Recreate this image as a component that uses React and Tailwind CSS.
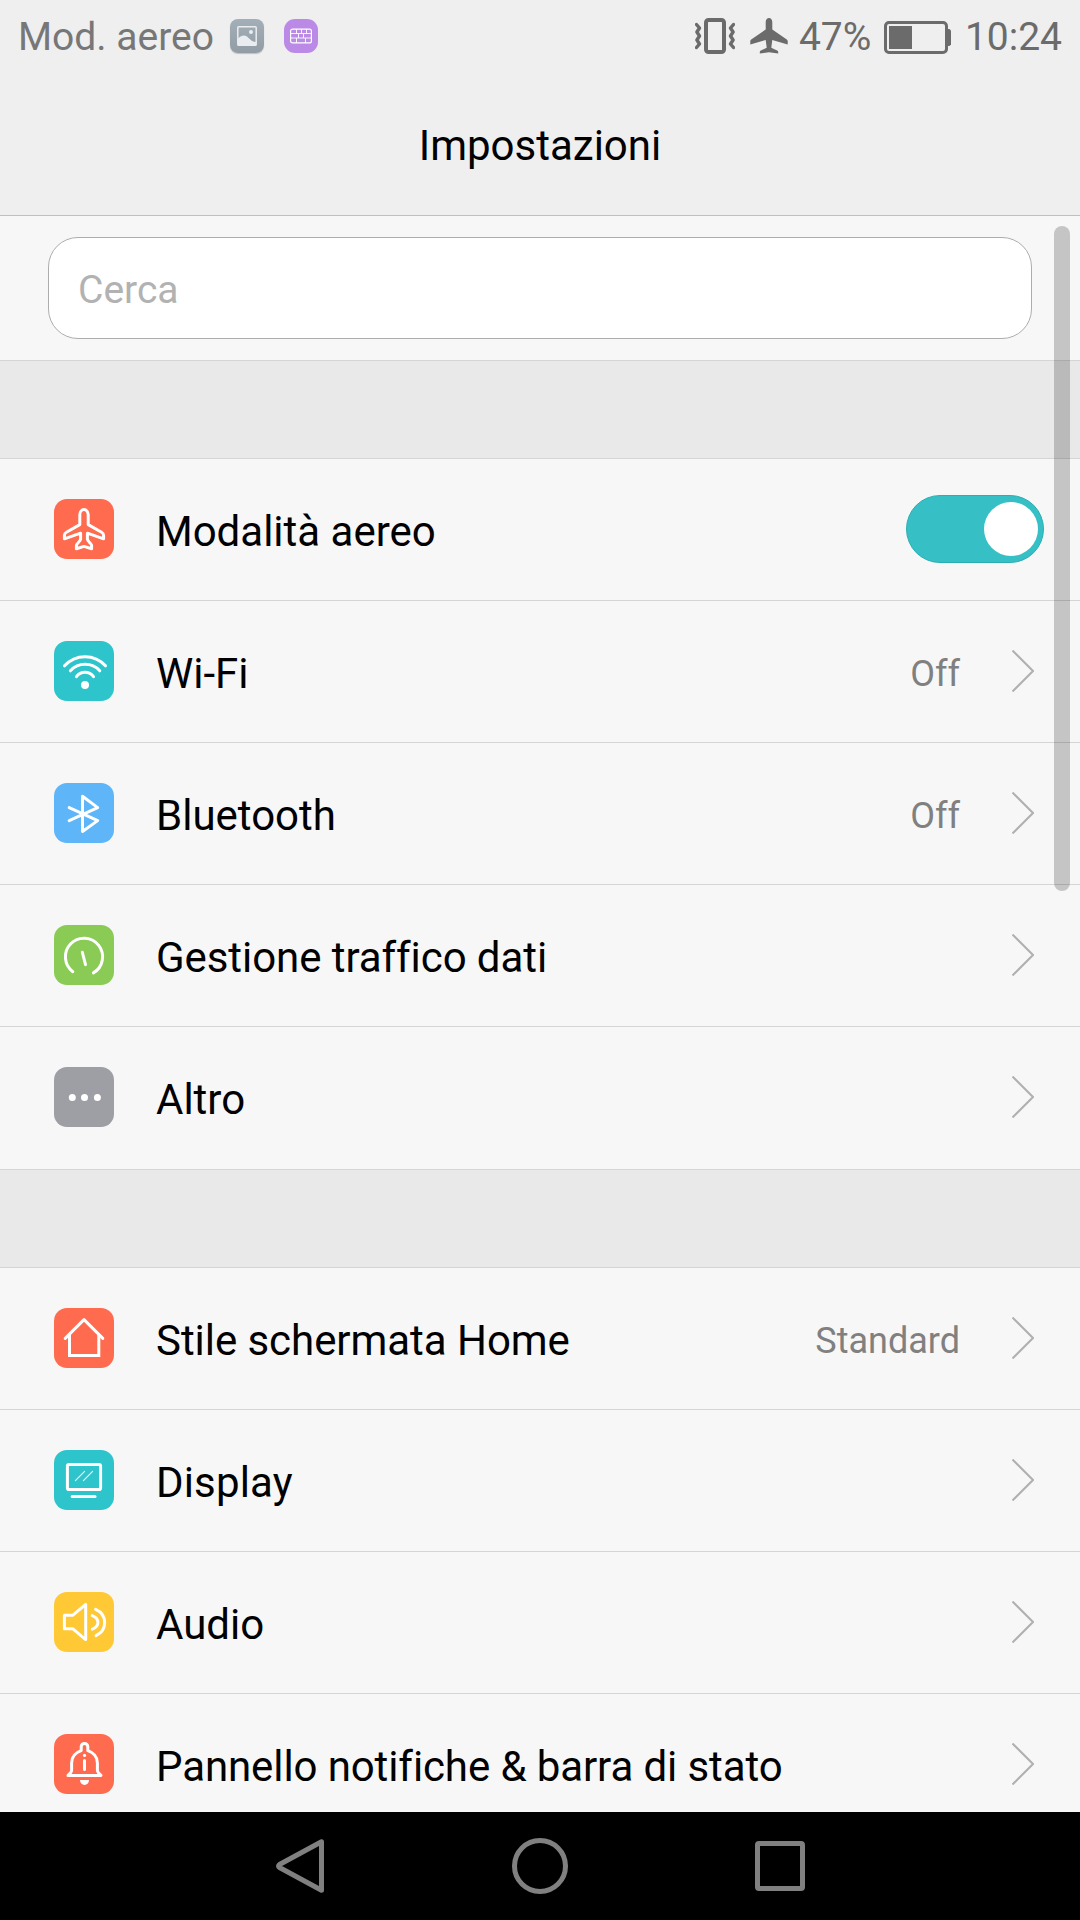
import React from 'react';

const PlaneIcon = () => (
  <path d="M30 10.6c-2.4 0-4.2 2.2-4.2 5.2v9.8L12.4 33.2c-1.4.8-2 1.8-2 3.2v3.4l16.2-5.6v6.2c-.9 2.8-3.8 3.6-4.2 6.2v3.2L30 47.4l7.6 2.4v-3.2c-.4-2.6-3.3-3.4-4.2-6.2v-6.2l16.2 5.6v-3.4c0-1.4-.6-2.4-2-3.2l-13.4-7.6v-9.8c0-3-1.8-5.2-4.2-5.2z" />
);

const WifiIcon = () => (
  <>
    <path d="M10.5 24.8a27.5 27.5 0 0 1 41 0" />
    <path d="M16.4 29.8a19.9 19.9 0 0 1 29.4 0" />
    <path d="M22.5 35.7a10.4 10.4 0 0 1 17 0" />
    <circle cx="31" cy="44" r="4" fill="white" stroke="none" />
  </>
);

const BluetoothIcon = () => (
  <path d="M15.2 24.6 43.7 37.6 28.5 48.5V13.3L43.7 24.6 15.2 37.6" />
);

const DataIcon = () => (
  <>
    <path d="M18.8 46.7a18.6 18.6 0 1 1 20.6 1.2" />
    <path d="M28.3 27.2 31.5 39.6" />
  </>
);

const MoreIcon = () => (
  <g fill="white" stroke="none">
    <circle cx="18.3" cy="30.4" r="3.5" />
    <circle cx="30.5" cy="30.4" r="3.5" />
    <circle cx="43.4" cy="30.4" r="3.5" />
  </g>
);

const HomeIcon = () => (
  <>
    <path d="M11.2 30.4 30 11.6 48.8 30.4" />
    <path d="M15.5 27v20.5h29.3V27" strokeLinejoin="miter" />
  </>
);

const DisplayIcon = () => (
  <>
    <rect x="13.4" y="14.4" width="33.2" height="25.2" rx="1.6" />
    <path d="M18.2 46.4H41" />
    <path d="M21.4 30.6l9.2-9.2M29.4 30.6l9.2-9.2" strokeWidth="1.1" />
  </>
);

const AudioIcon = () => (
  <>
    <path d="M10.4 23.3h8.2L31.7 12.4v35.2L18.6 36.7h-8.2z" />
    <path d="M38.2 23.6c7.6 2.8 7.6 10.6.2 13.6" />
    <path d="M41.6 17.4c12 5.2 12 21 .4 26.2" />
  </>
);

const BellIcon = () => (
  <>
    <path d="M27.2 16.6v-3.9a3.3 3.3 0 0 1 6.6 0v3.9c6 2 9.6 6.2 9.6 12.4v7.5c0 1.6 1.7 3 3.6 4.9H14c1.9-1.9 3.6-3.3 3.6-4.9V29c0-6.2 3.6-10.4 9.6-12.4z" />
    <path d="M30.5 26.6v9" />
    <circle cx="30.5" cy="21.4" r="1.6" fill="white" stroke="none" />
    <path d="M26 46h9a4.5 4.9 0 0 1-9 0z" fill="white" stroke="none" />
  </>
);

const groups = [
  [
    { label: 'Modalità aereo', icon: PlaneIcon, color: 'bg-[#ff6b4f]', toggle: true },
    { label: 'Wi-Fi', icon: WifiIcon, color: 'bg-[#2dc4cb]', value: 'Off' },
    { label: 'Bluetooth', icon: BluetoothIcon, color: 'bg-[#5eb6f8]', value: 'Off' },
    { label: 'Gestione traffico dati', icon: DataIcon, color: 'bg-[#8acb55]', spacing: 'tracking-[-0.07px]' },
    { label: 'Altro', icon: MoreIcon, color: 'bg-[#9e9fa5]' }
  ],
  [
    { label: 'Stile schermata Home', icon: HomeIcon, color: 'bg-[#ff6b4f]', value: 'Standard', spacing: 'tracking-[-0.05px]' },
    { label: 'Display', icon: DisplayIcon, color: 'bg-[#2dc4cb]', spacing: 'tracking-[0.15px]' },
    { label: 'Audio', icon: AudioIcon, color: 'bg-[#ffc835]' },
    { label: 'Pannello notifiche & barra di stato', icon: BellIcon, color: 'bg-[#ff6b4f]', spacing: 'tracking-[-0.1px]' }
  ]
];

const StatusBar = () => (
  <div className="flex h-[72px] shrink-0 items-center justify-between px-[18px] text-[39px] text-[#6b6b6b]">
    <div className="flex items-center">
      <span className="w-[212px] whitespace-nowrap pt-[2px] leading-[46px] text-[#777777]">Mod. aereo</span>
      <span className="flex h-[34px] w-[34px] items-center justify-center rounded-[8px] bg-linear-to-b from-[#a3afb8] to-[#929ca4] shadow-[0_1px_1px_rgba(0,0,0,0.2)]">
        <svg width="20" height="20" viewBox="0 0 20 20" fill="none">
          <rect x="0.8" y="0.8" width="18.4" height="18.4" rx="0.8" stroke="#e9edef" strokeWidth="1.5" />
          <circle cx="14" cy="6" r="2" fill="#e9edef" />
          <path d="M1 12.5C4 9.5 7 8.5 10 10.5c3 2.5 5 5.5 9 5.5v3H1z" fill="#e9edef" />
        </svg>
      </span>
      <span className="ml-5 flex h-[34px] w-[34px] items-center justify-center rounded-[11px] bg-[#bb8ae6]">
        <svg width="22" height="16" viewBox="0 0 22 16" fill="none" stroke="white">
          <rect x="0.6" y="1.1" width="20.8" height="13.8" rx="2" strokeWidth="1.2" />
          <path d="M1 5.5h20M1 10h20M6.5 1v4.5M13.5 5.5V10M8.5 5.5V10M11.5 1v4.5M16.5 1v4.5M6.5 10v5M15.5 10v5" strokeWidth="0.9" />
        </svg>
      </span>
    </div>

    <div className="flex items-center">
      <svg width="40" height="36" viewBox="0 0 40 36" fill="none" stroke="#6b6b6b">
        <rect x="11" y="2" width="18" height="32" rx="2.5" strokeWidth="4" />
        <g strokeWidth="3.4" strokeLinejoin="round" strokeLinecap="round">
          <path d="M1.5 6.5 4.5 10 1.9 14 4.5 18 1.9 22 4.5 26 1.5 29.5" />
          <path d="M38.5 6.5 35.5 10 38.1 14 35.5 18 38.1 22 35.5 26 38.5 29.5" />
        </g>
      </svg>
      <svg className="ml-[15px]" width="38" height="36" viewBox="0 0 38 36" fill="#6b6b6b">
        <path d="M19 0c-2 0-3.3 1.8-3.3 4.2v7.3L1.2 21.4q-.9.6-.9 1.5v3.7L15.7 22l1 7.8-5.8 2.7q-1.1.5-1.1 1.4v1.7L19 34.2l9.2 1.4v-1.7q0-.9-1.1-1.4l-5.8-2.7 1-7.8 15.4 4.6v-3.7q0-.9-.9-1.5L22.3 11.5V4.2C22.3 1.8 21 0 19 0z" />
      </svg>
      <span className="ml-[11px] w-[85px] whitespace-nowrap pt-[2px] leading-[46px]">47%</span>
      <svg className="mt-[3px]" width="67" height="33" viewBox="0 0 67 33" fill="none">
        <rect x="1.5" y="1.5" width="61" height="30" rx="3.5" stroke="#6b6b6b" strokeWidth="3" />
        <rect x="5" y="5" width="23" height="23" fill="#6b6b6b" />
        <path d="M63 8h2.5l1.5 1.5v14L65.5 25H63z" fill="#6b6b6b" />
      </svg>
      <span className="ml-[14px] whitespace-nowrap pt-[2px] leading-[46px]">10:24</span>
    </div>
  </div>
);

const Toggle = () => (
  <div className="-mr-[10px] flex h-[68px] w-[138px] items-center justify-end rounded-full border border-[#2aafb4] bg-[#36c0c6] pr-[5px]">
    <div className="h-[54px] w-[54px] rounded-full bg-white" />
  </div>
);

const Row = ({ item, isLast }) => {
  const Icon = item.icon;
  return (
    <div
      className={`flex shrink-0 items-center border-b border-[#d5d5d5] pl-[54px] pr-[46px] ${
        isLast ? 'h-[143px] pb-[2px]' : 'h-[142px] pb-px'
      }`}
    >
      <div className={`h-[60px] w-[60px] rounded-[13px] ${item.color}`}>
        <svg
          width="60"
          height="60"
          viewBox="0 0 60 60"
          fill="none"
          stroke="white"
          strokeWidth="3"
          strokeLinecap="round"
          strokeLinejoin="round"
        >
          <Icon />
        </svg>
      </div>
      <span className={`ml-[42px] flex-1 whitespace-nowrap pt-[5px] text-[42px] leading-[49px] text-black ${item.spacing || ''}`}>
        {item.label}
      </span>
      {item.toggle ? (
        <Toggle />
      ) : (
        <>
          {item.value && (
            <span className="pt-[6px] text-[36px] leading-[42px] text-[#808080]">{item.value}</span>
          )}
          <svg className="ml-[52px]" width="22" height="42" viewBox="0 0 22 42" fill="none" stroke="#b0b0b0" strokeWidth="2">
            <path d="M.5.5 21 21 .5 41.5" />
          </svg>
        </>
      )}
    </div>
  );
};

const NavBar = () => (
  <div className="flex h-[108px] shrink-0 items-center justify-center bg-black">
    <svg width="530" height="56" viewBox="0 0 530 56" fill="none" stroke="#808080" strokeWidth="5" strokeLinejoin="round">
      <path d="M46.5 3.8v48.4L4.5 29.5q-2-1.5 0-3z" />
      <circle cx="265" cy="28" r="25.5" />
      <rect x="482.5" y="5.5" width="45" height="45" rx="1.5" />
    </svg>
  </div>
);

const App = () => {
  return (
    <div className="flex h-[1920px] w-[1080px] flex-col overflow-hidden bg-[#f7f7f7] font-['Roboto',sans-serif]">
      <header className="flex h-[216px] shrink-0 flex-col border-b border-[#bfbfbf] bg-[#efefef]">
        <StatusBar />
        <h1 className="pt-[49px] text-center text-[42px] leading-[49px] text-black">Impostazioni</h1>
      </header>

      <main className="relative flex min-h-0 flex-1 flex-col overflow-hidden">
        <div className="h-[145px] shrink-0 border-b border-[#d5d5d5] px-12 pt-[21px]">
          <div className="flex h-[102px] items-center rounded-[30px] border border-[#adadad] bg-white pl-[29px]">
            <span className="pt-[3px] text-[39px] leading-[46px] text-[#b2b2b2]">Cerca</span>
          </div>
        </div>

        {groups.map((items, index) => (
          <React.Fragment key={index}>
            <div className="h-[98px] shrink-0 border-b border-[#d5d5d5] bg-[#e9e9e9]" />
            {items.map((item, i) => (
              <Row key={item.label} item={item} isLast={i === items.length - 1} />
            ))}
          </React.Fragment>
        ))}

        {/* Scroll indicator */}
        <div className="absolute right-[10px] top-[10px] h-[665px] w-4 rounded-full bg-black/20" />
      </main>

      <NavBar />
    </div>
  );
};

export default App;
